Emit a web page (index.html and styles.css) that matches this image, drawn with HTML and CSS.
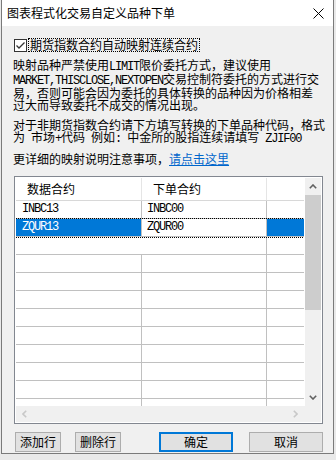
FILE: index.html
```html
<!DOCTYPE html>
<html lang="zh-CN">
<head>
    <meta charset="UTF-8">
    <title>图表程式化交易自定义品种下单</title>
    <link rel="stylesheet" href="styles.css">
</head>
<body>
    <div class="window">
        <div class="titlebar">
            <span class="title">图表程式化交易自定义品种下单</span>
            <svg class="close" width="11" height="11" viewBox="0 0 11 11">
                <path d="M0.5 0.5 L10.5 10.5 M10.5 0.5 L0.5 10.5" stroke="#000" stroke-width="1" fill="none"/>
            </svg>
        </div>

        <div class="client">
            <label class="check">
                <span class="box">
                    <svg width="11" height="11" viewBox="0 0 11 11">
                        <polyline points="1.5,5.5 4,8 9.5,2.5" stroke="#333" stroke-width="1.3" fill="none"/>
                    </svg>
                </span>
                <span class="check-text">期货指数合约自动映射连续合约</span>
            </label>

            <p class="note">映射品种严禁使用<span class="en">LIMIT</span>限价委托方式，建议使用<br><span class="en">MARKET,THISCLOSE,NEXTOPEN</span>交易控制符委托的方式进行交<br>易，否则可能会因为委托的具体转换的品种因为价格相差<br>过大而导致委托不成交的情况出现。</p>

            <p class="note">对于非期货指数合约请下方填写转换的下单品种代码，格式<br>为<span class="en"> </span>市场<span class="en">+</span>代码<span class="en"> </span>例如<span class="en">: </span>中金所的股指连续请填写<span class="en"> ZJIF00</span></p>

            <p class="note">更详细的映射说明注意事项，<a class="link" href="#">请点击这里</a></p>

            <!-- 映射表 -->
            <div class="grid">
                <div class="grid-main">
                    <div class="table">
                        <div class="row head">
                            <div class="cell">数据合约</div>
                            <div class="cell">下单合约</div>
                            <div class="cell"></div>
                        </div>
                        <div class="row">
                            <div class="cell en">INBC13</div>
                            <div class="cell en">INBC00</div>
                            <div class="cell"></div>
                        </div>
                        <div class="row selected">
                            <div class="cell en">ZQUR13</div>
                            <div class="cell en">ZQUR00</div>
                            <div class="cell"></div>
                        </div>
                        <div class="row">
                            <div class="cell open"></div>
                            <div class="cell"></div>
                            <div class="cell"></div>
                        </div>
                        <div class="row"><div class="cell"></div><div class="cell"></div><div class="cell"></div></div>
                        <div class="row"><div class="cell"></div><div class="cell"></div><div class="cell"></div></div>
                        <div class="row"><div class="cell"></div><div class="cell"></div><div class="cell"></div></div>
                        <div class="row"><div class="cell"></div><div class="cell"></div><div class="cell"></div></div>
                        <div class="row"><div class="cell"></div><div class="cell"></div><div class="cell"></div></div>
                        <div class="row"><div class="cell"></div><div class="cell"></div><div class="cell"></div></div>
                        <div class="row"><div class="cell"></div><div class="cell"></div><div class="cell"></div></div>
                        <div class="row"><div class="cell"></div><div class="cell"></div><div class="cell"></div></div>
                        <div class="row"><div class="cell"></div><div class="cell"></div><div class="cell"></div></div>
                    </div>
                    <div class="vscroll">
                        <div class="arrow">
                            <svg width="8" height="5" viewBox="0 0 8 5"><polyline points="0.8,4.2 4,1 7.2,4.2" stroke="#606060" stroke-width="1.6" fill="none"/></svg>
                        </div>
                        <div class="thumb"></div>
                        <div class="track"></div>
                        <div class="arrow">
                            <svg width="8" height="5" viewBox="0 0 8 5"><polyline points="0.8,0.8 4,4 7.2,0.8" stroke="#606060" stroke-width="1.6" fill="none"/></svg>
                        </div>
                    </div>
                </div>
                <div class="hscroll">
                    <div class="arrow">
                        <svg width="5" height="8" viewBox="0 0 5 8"><polyline points="4.2,0.8 1,4 4.2,7.2" stroke="#c8c8c8" stroke-width="1.6" fill="none"/></svg>
                    </div>
                    <div class="track"></div>
                    <div class="arrow">
                        <svg width="5" height="8" viewBox="0 0 5 8"><polyline points="0.8,0.8 4,4 0.8,7.2" stroke="#c8c8c8" stroke-width="1.6" fill="none"/></svg>
                    </div>
                    <div class="corner"></div>
                </div>
            </div>

            <div class="buttons">
                <button class="btn small">添加行</button>
                <button class="btn small del">删除行</button>
                <button class="btn wide ok">确定</button>
                <button class="btn wide cancel">取消</button>
            </div>
        </div>
    </div>
</body>
</html>
```

FILE: styles.css
```css
body {
    margin: 0;
    background: #e9e9e9;
    font-family: "Noto Sans CJK SC", sans-serif;
    font-size: 12px;
    color: #000;
}

.window {
    width: 333px;
    height: 454px;
    margin-left: 1px;
    box-sizing: border-box;
    border: 1px solid #7a7a7a;
    border-top: none;
    background: #f0f0f0;
    display: flex;
    flex-direction: column;
}

.titlebar {
    height: 26px;
    flex: none;
    background: #fff;
    display: flex;
    align-items: center;
    justify-content: space-between;
    padding: 0 9px 0 5px;
}

.title {
    font-size: 12px;
    line-height: 14px;
}

.close {
    display: block;
    margin-top: 1px;
}

.client {
    flex: 1;
    padding: 12px 10px 0 12px;
}

.en {
    font-family: "Liberation Mono", monospace;
    font-size: 12px;
    letter-spacing: -1.2px;
}

/* 复选框 */
.check {
    display: flex;
    align-items: center;
    height: 14px;
}

.box {
    width: 13px;
    height: 13px;
    box-sizing: border-box;
    border: 1px solid #333;
    background: #fff;
    margin-right: 2px;
    display: flex;
    align-items: center;
    justify-content: center;
}

.box svg {
    display: block;
}

.check-text {
    line-height: 12px;
    padding: 0 1px;
    outline: 1px dotted #000;
}

.note {
    margin: 8px 0 0 -1px;
    line-height: 12px;
    white-space: nowrap;
}

.check + .note {
    margin-top: 7px;
}

.link {
    color: #0066cc;
}

/* 表格 */
.grid {
    margin-top: 11px;
    width: 309px;
    height: 248px;
    box-sizing: border-box;
    border: 1px solid #828790;
    padding: 1px;
    background: #fff;
    display: flex;
    flex-direction: column;
}

.grid-main {
    height: 228px;
    display: flex;
}

.table {
    width: 288px;
    overflow: hidden;
}

.row {
    display: grid;
    grid-template-columns: 126px 125px 37px;
    height: 18px;
    box-sizing: border-box;
    border-bottom: 1px solid #c0c0c0;
}

.cell {
    box-sizing: border-box;
    border-right: 1px solid #c0c0c0;
    line-height: 17px;
    white-space: nowrap;
}

.cell:first-child {
    padding-left: 6px;
}

.cell:nth-child(2) {
    padding-left: 5px;
}

.cell:last-child {
    border-right: none;
}

.cell.open {
    border-right-color: transparent;
}

.row.head {
    height: 23px;
    border-bottom-color: #d8d8d8;
}

.row.head .cell {
    border-right-color: #e5e5e5;
    line-height: 22px;
    padding-left: 11px;
    color: #000;
}

.row.selected {
    outline: 1px dotted #000;
    outline-offset: 0;
    position: relative;
}

.row.selected .cell:first-child,
.row.selected .cell:last-child {
    background: #0078d7;
    color: #fff;
}

.vscroll {
    width: 16px;
    margin-left: 1px;
    background: #f0f0f0;
    display: flex;
    flex-direction: column;
}

.vscroll .arrow {
    height: 17px;
    display: flex;
    align-items: center;
    justify-content: center;
}

.vscroll .thumb {
    height: 115px;
    background: #cdcdcd;
}

.vscroll .track {
    flex: 1;
}

.hscroll {
    height: 16px;
    background: #f0f0f0;
    display: flex;
}

.hscroll .arrow {
    width: 17px;
    display: flex;
    align-items: center;
    justify-content: center;
}

.hscroll .track {
    flex: 1;
}

.hscroll .corner {
    width: 17px;
}

/* 按钮 */
.buttons {
    display: flex;
    margin-top: 8px;
    padding-left: 1px;
}

.btn {
    height: 20px;
    box-sizing: border-box;
    border: 1px solid #adadad;
    background: #e1e1e1;
    font-family: "Noto Sans CJK SC", sans-serif;
    font-size: 12px;
    line-height: 16px;
    padding: 0;
    color: #000;
}

.btn.small {
    width: 46px;
}

.btn.wide {
    width: 74px;
}

.btn.del {
    margin-left: 14px;
}

.btn.ok {
    margin-left: 38px;
    border: 2px solid #0078d7;
}

.btn.cancel {
    margin-left: 16px;
}
```
